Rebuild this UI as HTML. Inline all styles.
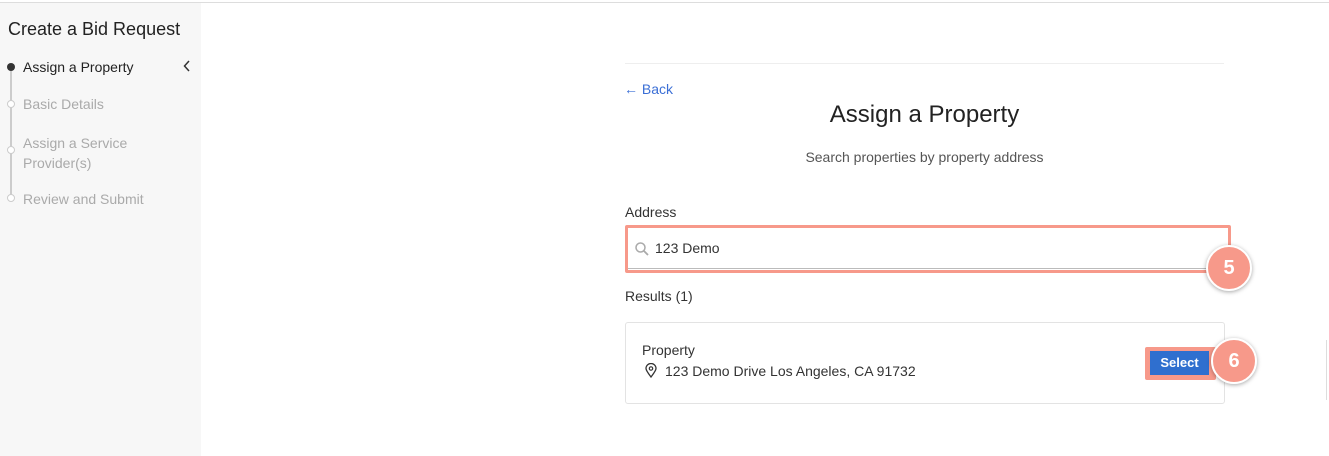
<!DOCTYPE html>
<html><head><style>
body{margin:0;width:1329px;height:456px;background:#fff;font-family:"Liberation Sans",sans-serif;position:relative;overflow:hidden;color:#333}
.a{position:absolute;white-space:nowrap}
</style></head><body>
<div class="a" style="left:0;top:2px;width:1329px;height:1px;background:#ddd"></div>
<div class="a" style="left:0;top:3px;width:201px;height:453px;background:#f7f7f7"></div>
<div class="a" style="left:8px;top:19px;font-size:18px;color:#222">Create a Bid Request</div>
<div class="a" style="left:10px;top:67px;width:2px;height:132px;background:#ccc"></div>
<div class="a" style="left:7px;top:63px;width:8px;height:8px;border-radius:50%;background:#333"></div>
<div class="a" style="left:7px;top:100px;width:6px;height:6px;border-radius:50%;background:#fff;border:1px solid #ccc"></div>
<div class="a" style="left:7px;top:146px;width:6px;height:6px;border-radius:50%;background:#fff;border:1px solid #ccc"></div>
<div class="a" style="left:7px;top:194px;width:6px;height:6px;border-radius:50%;background:#fff;border:1px solid #ccc"></div>
<div class="a" style="left:23px;top:59px;font-size:14px;color:#222">Assign a Property</div>
<svg class="a" style="left:183px;top:60px" width="8" height="12" viewBox="0 0 8 12"><path d="M6 1L1.5 6 6 11" fill="none" stroke="#333" stroke-width="1.5"/></svg>
<div class="a" style="left:23px;top:96px;font-size:14px;color:#aaa">Basic Details</div>
<div class="a" style="left:23px;top:133px;font-size:14px;color:#aaa;line-height:20px">Assign a Service<br>Provider(s)</div>
<div class="a" style="left:23px;top:191px;font-size:14px;color:#aaa">Review and Submit</div>

<div class="a" style="left:625px;top:63px;width:599px;height:1px;background:#eee"></div>
<div class="a" style="left:624px;top:81px;font-size:14px;color:#3b6fd6">← Back</div>
<div class="a" style="left:625px;width:599px;text-align:center;top:101px;font-size:24px;color:#222">Assign a Property</div>
<div class="a" style="left:625px;width:599px;text-align:center;top:149px;font-size:14px;color:#555">Search properties by property address</div>
<div class="a" style="left:625px;top:204px;font-size:14px;color:#333">Address</div>
<div class="a" style="left:625px;top:225px;width:606px;height:48px;border:3px solid #f7998a;border-radius:2px;background:#fff;box-sizing:border-box"></div>
<div class="a" style="left:628px;top:268px;width:600px;height:1px;background:#bbb"></div>
<svg class="a" style="left:634px;top:241px" width="16" height="16" viewBox="0 0 16 16"><circle cx="6.5" cy="6.5" r="4.5" fill="none" stroke="#aaa" stroke-width="1.5"/><path d="M10 10l4 4" stroke="#aaa" stroke-width="1.8"/></svg>
<div class="a" style="left:655px;top:240px;font-size:14px;color:#333">123 Demo</div>
<div class="a" style="left:1206px;top:245px;width:42px;height:42px;border-radius:50%;background:#f7998a;border:2px solid #fff;box-shadow:0 1px 4px rgba(0,0,0,.35);color:#fff;font-size:20px;font-weight:bold;text-align:center;line-height:42px">5</div>
<div class="a" style="left:625px;top:288px;font-size:14px;color:#333">Results (1)</div>
<div class="a" style="left:625px;top:322px;width:600px;height:82px;border:1px solid #e3e3e3;border-radius:3px;box-sizing:border-box"></div>
<div class="a" style="left:642px;top:342px;font-size:14px;color:#333">Property</div>
<svg class="a" style="left:645px;top:363px" width="12" height="15" viewBox="0 0 12 15"><path d="M6 14C3 10 1 7.5 1 5.5a5 5 0 0110 0C11 7.5 9 10 6 14z" fill="none" stroke="#333" stroke-width="1.3"/><circle cx="6" cy="5.5" r="1.7" fill="none" stroke="#333" stroke-width="1.2"/></svg>
<div class="a" style="left:665px;top:363px;font-size:14px;color:#333">123 Demo Drive Los Angeles, CA 91732</div>
<div class="a" style="left:1145px;top:347px;width:71px;height:33px;background:#f7998a;border-radius:2px"></div>
<div class="a" style="left:1150px;top:351px;width:59px;height:24px;background:#2f6fcf;color:#fff;font-size:13px;font-weight:bold;text-align:center;line-height:24px">Select</div>
<div class="a" style="left:1211px;top:338px;width:42px;height:42px;border-radius:50%;background:#f7998a;border:2px solid #fff;box-shadow:0 1px 4px rgba(0,0,0,.35);color:#fff;font-size:20px;font-weight:bold;text-align:center;line-height:42px">6</div>
<div class="a" style="left:1326px;top:340px;width:1px;height:60px;background:#ddd"></div>
</body></html>
